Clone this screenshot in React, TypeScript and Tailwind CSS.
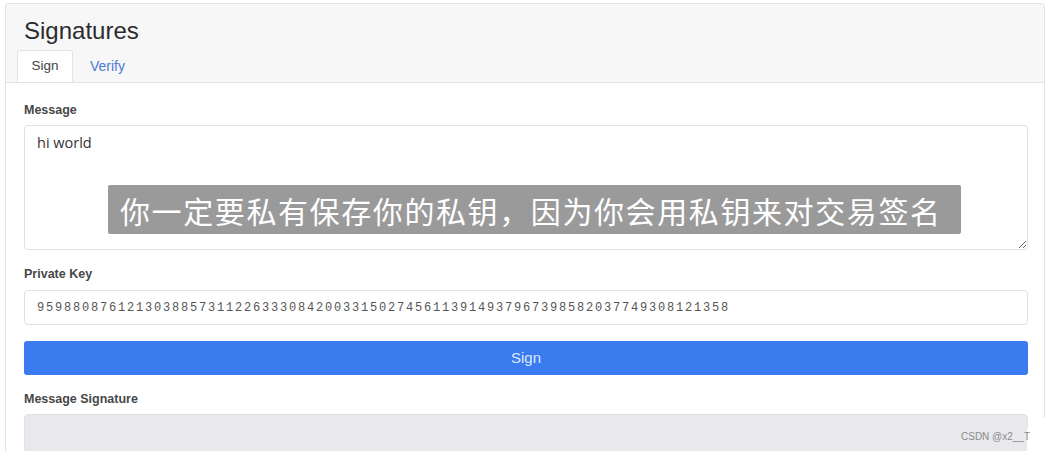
import React from "react";

export default function App() {
  const key =
    "95988087612130388573112263330842003315027456113914937967398582037749308121358";
  return (
    <div
      className="relative w-[1046px] h-[451px] overflow-hidden bg-white"
      style={{ fontFamily: '"Liberation Sans", Arial, sans-serif' }}
    >
      <div className="ml-[5px] mt-[3px] w-[1040px] h-[460px] border border-[#e3e3e6] rounded-[3px] bg-white">
        <div className="bg-[#f7f7f8] border-b border-[#e3e3e6] h-[79px] flex flex-col justify-between">
          <h1 className="pl-[18px] pt-[12px] text-[24px] leading-[30px] text-[#2b2b2b]">Signatures</h1>
          <div className="flex pl-[11px] text-[13.5px]">
            <div className="w-[56px] h-[32px] -mb-px bg-white border border-b-0 border-[#e3e3e6] rounded-t-[3px] flex items-center justify-center text-[#444]">
              Sign
            </div>
            <div className="h-[32px] flex items-center pl-[17px] text-[14px] text-[#4b7bd6]">Verify</div>
          </div>
        </div>
        <div className="px-[18px] pr-[16px]">
          <div className="mt-[19px] text-[12.5px] leading-[16px] font-semibold text-[#484848]">Message</div>
          <textarea
            readOnly
            defaultValue="hi world"
            className="mt-[7px] block w-full h-[125px] border border-[#e1e1e4] rounded-[4px] px-[12px] py-[7px] text-[14.5px] leading-[20px] text-[#333] outline-none"
            style={{ fontFamily: '"Open Sans", "Liberation Sans", Arial, sans-serif' }}
          />
          <div className="mt-[16px] text-[12.5px] leading-[16px] font-semibold text-[#484848]">Private Key</div>
          <div className="mt-[8px] h-[35px] border border-[#e1e1e4] rounded-[4px] px-[12px] flex items-center text-[12px] tracking-[1.8px] text-[#555]" style={{ fontFamily: '"Liberation Mono", "DejaVu Sans Mono", monospace' }}>
            {key}
          </div>
          <button className="mt-[16px] w-full h-[34px] rounded-[3px] bg-[#3a7bf0] text-[#dce9ff] text-[15px] flex items-center justify-center">
            Sign
          </button>
          <div className="mt-[16px] text-[12.5px] leading-[16px] font-semibold text-[#484848]">Message Signature</div>
          <div className="mt-[7px] h-[40px] rounded-[4px] bg-[#e9e9ed] border border-[#e1e1e4]" />
        </div>
      </div>

      <div
        className="absolute left-[108px] top-[185px] w-[853px] h-[49px] rounded-[2px] bg-[#9a9a9a] flex items-center pl-[12px] text-[30px] tracking-[1.6px] leading-none text-white"
        style={{ fontFamily: '"Noto Sans CJK SC", "Noto Sans", sans-serif' }}
      >
        你一定要私有保存你的私钥，因为你会用私钥来对交易签名
      </div>

      <div className="absolute left-[1027px] top-[418px] w-[40px] h-[50px] bg-white rounded-tl-[14px]" />
      <div className="absolute left-[961px] top-[431px] text-[10px] leading-[12px] text-[#8a8a8a]">
        CSDN @x2__T
      </div>
    </div>
  );
}
